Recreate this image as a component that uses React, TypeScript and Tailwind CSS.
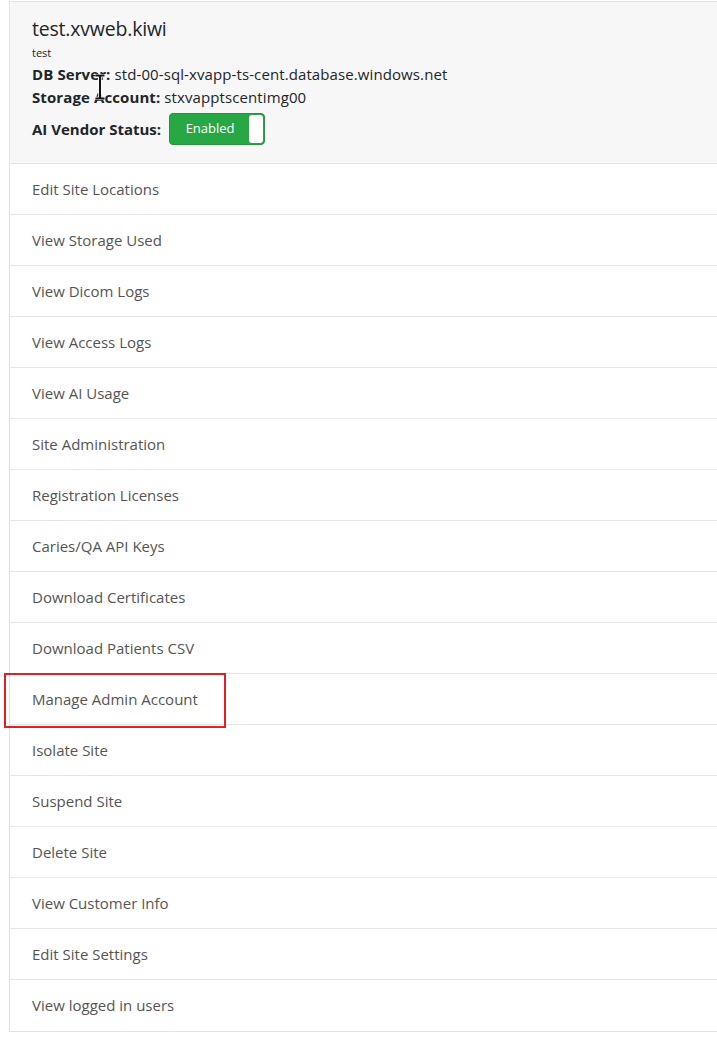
import React from 'react';

const items = [
	'Edit Site Locations',
	'View Storage Used',
	'View Dicom Logs',
	'View Access Logs',
	'View AI Usage',
	'Site Administration',
	'Registration Licenses',
	'Caries/QA API Keys',
	'Download Certificates',
	'Download Patients CSV',
	'Manage Admin Account',
	'Isolate Site',
	'Suspend Site',
	'Delete Site',
	'View Customer Info',
	'Edit Site Settings',
	'View logged in users',
];

function Cursor() {
	return (
		<svg className="absolute left-[84px] top-[72px]" width="12" height="26" viewBox="0 0 12 26">
			<path d="M1.5 1.5h3.5l1 1 1-1h3.5M6 2.5v21M1.5 24.5h3.5l1-1 1 1h3.5" stroke="#fff" strokeWidth="3.5" fill="none" />
			<path d="M1.5 1.5h3.5l1 1 1-1h3.5M6 2.5v21M1.5 24.5h3.5l1-1 1 1h3.5" stroke="#111" strokeWidth="2" fill="none" />
		</svg>
	);
}

export default function App() {
	return (
		<div className="min-h-[1056px] bg-white pt-px pl-[9px] font-['Open_Sans','Noto_Sans',sans-serif] text-[#212529]">
			<div className="border border-r-0 border-[#e3e3e3]">
				<div className="relative bg-[#f7f7f7] px-[22px] pt-[14px] pb-[18px] border-b border-[#e3e3e3]">
					<h1 className="text-[19.5px] leading-[26px] tracking-[-0.2px]">test.xvweb.kiwi</h1>
					<p className="text-[11px] leading-[14px] mt-[4px]">test</p>
					<p className="text-[15px] leading-[23px] mt-[3px] tracking-[0.1px]">
						<span className="font-bold">DB Server:</span> std-00-sql-xvapp-ts-cent.database.windows.net
					</p>
					<p className="text-[15px] leading-[23px] tracking-[0.1px]">
						<span className="font-bold">Storage Account:</span> stxvapptscentimg00
					</p>
					<div className="flex items-center gap-2 mt-[4px]">
						<span className="text-[15px] font-bold">AI Vendor Status:</span>
						<div className="flex h-[32px] w-[96px] items-stretch rounded-[4px] bg-[#28a745] border border-[#23963e] p-px">
							<span className="flex-1 flex items-center justify-center text-[13px] text-white">Enabled</span>
							<span className="w-[14px] rounded-[3px] bg-white" />
						</div>
					</div>
					<Cursor />
				</div>
				{items.map(item => (
					<div key={item} className="relative h-[51px] border-b border-[#e6e6e6] last:border-b-0 flex items-center px-[22px]">
						<span className="text-[15px] text-[#555]">{item}</span>
						{item === 'Manage Admin Account' && (
							<div className="absolute left-[-6px] top-[-1px] w-[222px] h-[55px] border-2 border-[#e31e24]" />
						)}
					</div>
				))}
			</div>
		</div>
	);
}
